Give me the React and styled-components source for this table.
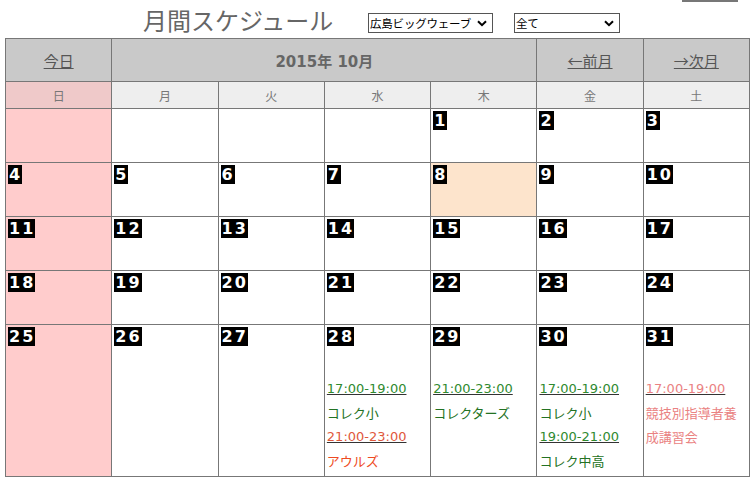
import React from "react";
import styled, { createGlobalStyle } from "styled-components";

const GlobalStyle = createGlobalStyle`
  body {
    margin: 0;
    background: #fff;
    font-family: "DejaVu Sans", "Noto Sans CJK JP", sans-serif;
  }
`;

const Page = styled.div`
  width: 755px;
  padding: 0 5px;
  box-sizing: border-box;
`;

const TopStrip = styled.div`
  display: flex;
  justify-content: flex-end;
  height: 2px;
`;

const TopTab = styled.div`
  width: 56px;
  height: 2px;
  background: #777;
  margin-right: 12px;
`;

const Header = styled.div`
  display: flex;
  align-items: flex-start;
  height: 36px;
  padding-left: 138px;
`;

const Title = styled.h1`
  margin: 3px 0 0;
  width: 192px;
  font-family: "Noto Sans CJK JP", sans-serif;
  font-weight: normal;
  font-size: 24px;
  line-height: 30px;
  color: #666;
  white-space: nowrap;
`;

const SelectBox = styled.div`
  display: flex;
  align-items: center;
  box-sizing: border-box;
  width: ${(p) => p.$width}px;
  height: 20px;
  margin: 11px 0 0 ${(p) => p.$gap}px;
  border: 1px solid #555;
  background: #fff;
  padding-right: 5px;
`;

const Select = styled.select`
  appearance: none;
  flex: 1;
  min-width: 0;
  border: none;
  background: transparent;
  padding: 0 1px;
  font-family: "Noto Sans CJK JP", sans-serif;
  font-size: 11.5px;
  letter-spacing: -0.2px;
  color: #000;
  outline: none;
`;

const Table = styled.table`
  width: 745px;
  border-collapse: collapse;
  table-layout: fixed;
`;

const NavCell = styled.th`
  height: 42px;
  padding: 0;
  border: 1px solid #777;
  background: #c9c9c9;
  font-weight: ${(p) => (p.$bold ? "bold" : "normal")};
  font-size: 15px;
  color: #666;
  text-align: center;
`;

const NavLink = styled.a`
  color: #555;
  text-decoration: underline;
  font-family: "Noto Sans CJK JP", sans-serif;
  font-size: 15px;
  cursor: pointer;
`;

const DayName = styled.th`
  height: 26px;
  padding: 0;
  border: 1px solid #777;
  background: ${(p) => (p.$sun ? "#efc9c9" : "#eeeeee")};
  font-family: "Noto Sans CJK JP", sans-serif;
  font-weight: normal;
  font-size: 12px;
  color: #777;
  text-align: center;
`;

const DayCell = styled.td`
  height: 49px;
  padding: 1px 2px 3px;
  border: 1px solid #777;
  vertical-align: top;
  background: ${(p) => p.$bg};
`;

const DateBadge = styled.span`
  display: inline-block;
  background: #000;
  color: #fff;
  font-family: "DejaVu Sans", sans-serif;
  font-weight: bold;
  font-size: 16px;
  line-height: 19px;
  letter-spacing: 2px;
  padding: 0 0 0 1px;
  margin-top: 1px;
`;

const EventList = styled.div`
  margin-top: 31px;
  font-size: 13px;
  line-height: 24px;
`;

const EventTime = styled.a`
  display: block;
  color: ${(p) => p.$color};
  text-decoration: underline;
  text-decoration-color: #333;
  cursor: pointer;
`;

const EventName = styled.div`
  color: ${(p) => p.$color};
  font-family: "Noto Sans CJK JP", sans-serif;
`;

const GREEN = "#2f8a2f";
const GREEN_DARK = "#237223";
const RED = "#e0583c";
const PINK = "#ea8282";

const events = {
  28: [
    { time: "17:00-19:00", name: "コレク小", color: GREEN, nameColor: GREEN_DARK },
    { time: "21:00-23:00", name: "アウルズ", color: RED, nameColor: "#ee4a22" },
  ],
  29: [{ time: "21:00-23:00", name: "コレクターズ", color: GREEN, nameColor: GREEN_DARK }],
  30: [
    { time: "17:00-19:00", name: "コレク小", color: GREEN, nameColor: GREEN_DARK },
    { time: "19:00-21:00", name: "コレク中高", color: GREEN, nameColor: GREEN_DARK },
  ],
  31: [{ time: "17:00-19:00", name: "競技別指導者養成講習会", color: PINK, nameColor: PINK }],
};

const dayNames = ["日", "月", "火", "水", "木", "金", "土"];
const TODAY = 8;

function buildWeeks() {
  const cells = [null, null, null, null];
  for (let d = 1; d <= 31; d++) cells.push(d);
  const weeks = [];
  for (let i = 0; i < cells.length; i += 7) weeks.push(cells.slice(i, i + 7));
  return weeks;
}

function App() {
  const weeks = buildWeeks();
  return (
    <Page>
      <GlobalStyle />
      <TopStrip>
        <TopTab />
      </TopStrip>
      <Header>
        <Title>月間スケジュール</Title>
        <SelectBox $width={125} $gap={33}>
          <Select defaultValue="hbw">
            <option value="hbw">広島ビッグウェーブ</option>
          </Select>
          <svg width="10" height="7" viewBox="0 0 10 7">
            <path d="M1 1.2 L5 5.2 L9 1.2" fill="none" stroke="#000" strokeWidth="2" />
          </svg>
        </SelectBox>
        <SelectBox $width={106} $gap={21}>
          <Select defaultValue="all">
            <option value="all">全て</option>
          </Select>
          <svg width="10" height="7" viewBox="0 0 10 7">
            <path d="M1 1.2 L5 5.2 L9 1.2" fill="none" stroke="#000" strokeWidth="2" />
          </svg>
        </SelectBox>
      </Header>
      <Table>
        <thead>
          <tr>
            <NavCell>
              <NavLink>今日</NavLink>
            </NavCell>
            <NavCell colSpan={4} $bold>
              2015年 10月
            </NavCell>
            <NavCell>
              <NavLink>←前月</NavLink>
            </NavCell>
            <NavCell>
              <NavLink>→次月</NavLink>
            </NavCell>
          </tr>
          <tr>
            {dayNames.map((n, i) => (
              <DayName key={n} $sun={i === 0}>
                {n}
              </DayName>
            ))}
          </tr>
        </thead>
        <tbody>
          {weeks.map((week, wi) => (
            <tr key={wi}>
              {week.map((d, i) => {
                const bg = d === TODAY ? "#fde4cc" : i === 0 ? "#ffcccc" : "#fff";
                return (
                  <DayCell key={i} $bg={bg}>
                    {d && <DateBadge>{d}</DateBadge>}
                    {d && events[d] && (
                      <EventList>
                        {events[d].map((ev) => (
                          <React.Fragment key={ev.time}>
                            <EventTime $color={ev.color}>{ev.time}</EventTime>
                            <EventName $color={ev.nameColor}>{ev.name}</EventName>
                          </React.Fragment>
                        ))}
                      </EventList>
                    )}
                  </DayCell>
                );
              })}
            </tr>
          ))}
        </tbody>
      </Table>
    </Page>
  );
}

export default App;
